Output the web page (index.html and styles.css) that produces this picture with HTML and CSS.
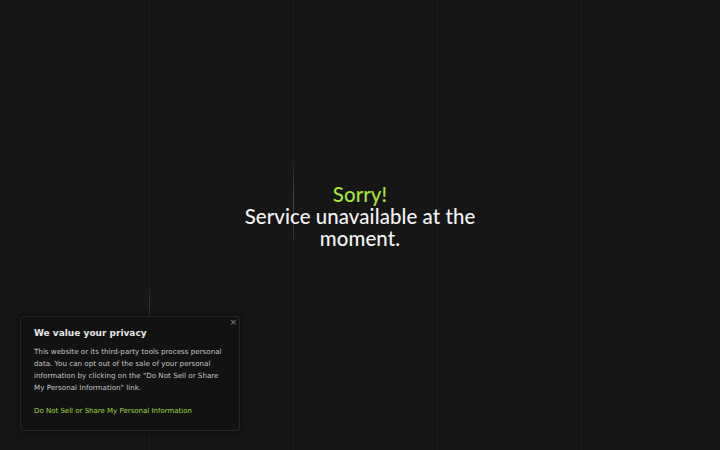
FILE: index.html
```html
<!DOCTYPE html>
<html lang="en">
<head>
<meta charset="utf-8">
<title>Service unavailable</title>
<link rel="stylesheet" href="styles.css">
</head>
<body>
<div class="page">
  <div class="grid-lines" aria-hidden="true">
    <div class="col col-first"></div>
    <div class="col"><span class="glow glow-a"></span></div>
    <div class="col"><span class="glow glow-b"></span></div>
    <div class="col"></div>
    <div class="col"></div>
  </div>
  <main class="message">
    <h1 class="title"><span class="line sorry">Sorry!</span><span class="line">Service unavailable at the</span><span class="line">moment.</span></h1>
  </main>
  <aside class="cookie">
    <button class="close" aria-label="Close">×</button>
    <h2 class="cookie-title">We value your privacy</h2>
    <p class="cookie-text">This website or its third-party tools process personal data. You can opt out of the sale of your personal information by clicking on the "Do Not Sell or Share My Personal Information" link.</p>
    <a class="cookie-link" href="#">Do Not Sell or Share My Personal Information</a>
  </aside>
</div>
</body>
</html>
```

FILE: styles.css
```css
html, body {
  margin: 0;
  padding: 0;
  background: #161616;
  height: 100%;
}
.page {
  position: relative;
  height: 450px;
  width: 720px;
  overflow: hidden;
  display: flex;
  align-items: center;
  justify-content: center;
}
.grid-lines {
  position: absolute;
  inset: 0;
  display: grid;
  grid-template-columns: 149px 144px 144px 144px 1fr;
}
.col {
  position: relative;
  border-left: 1px solid #1c1c1c;
}
.col-first {
  border-left: none;
}
.glow {
  position: absolute;
  left: -1px;
  width: 1px;
}
.glow-a {
  top: 285px;
  height: 40px;
  background: linear-gradient(to bottom, rgba(255,255,255,0), rgba(255,255,255,0.12), rgba(255,255,255,0));
}
.glow-b {
  top: 160px;
  height: 80px;
  background: linear-gradient(to bottom, rgba(255,255,255,0), rgba(255,255,255,0.2), rgba(255,255,255,0.08));
}
.message {
  position: relative;
  text-align: center;
  margin-top: -18px;
}
.title {
  margin: 0;
  font-family: "Lato", "Open Sans", sans-serif;
  font-weight: 500;
  font-size: 20.4px;
  line-height: 22px;
  color: #f2f2f2;
  letter-spacing: 0.1px;
}
.line {
  display: block;
  height: 22px;
}
.sorry {
  color: #a6e23a;
}
.cookie {
  position: absolute;
  left: 20px;
  top: 316px;
  width: 192px;
  padding: 10px 13px 13px 13px;
  background: #121212;
  border: 1px solid #262626;
  border-radius: 3px;
  box-shadow: 0 0 6px rgba(0,0,0,0.6);
  font-family: "DejaVu Sans", sans-serif;
}
.close {
  position: absolute;
  top: 0;
  right: 2px;
  background: none;
  border: none;
  padding: 0;
  color: #8a8a8a;
  font-family: "DejaVu Sans", sans-serif;
  font-size: 9px;
  line-height: 10px;
  cursor: pointer;
}
.cookie-title {
  margin: 0 0 6px 0;
  font-size: 9px;
  line-height: 13px;
  font-weight: bold;
  color: #e6e6e6;
}
.cookie-text {
  margin: 0 0 11px 0;
  font-size: 7.15px;
  line-height: 12px;
  color: #c4c4c4;
}
.cookie-link {
  display: block;
  font-size: 7px;
  line-height: 12px;
  color: #9fd640;
  text-decoration: none;
}
```
